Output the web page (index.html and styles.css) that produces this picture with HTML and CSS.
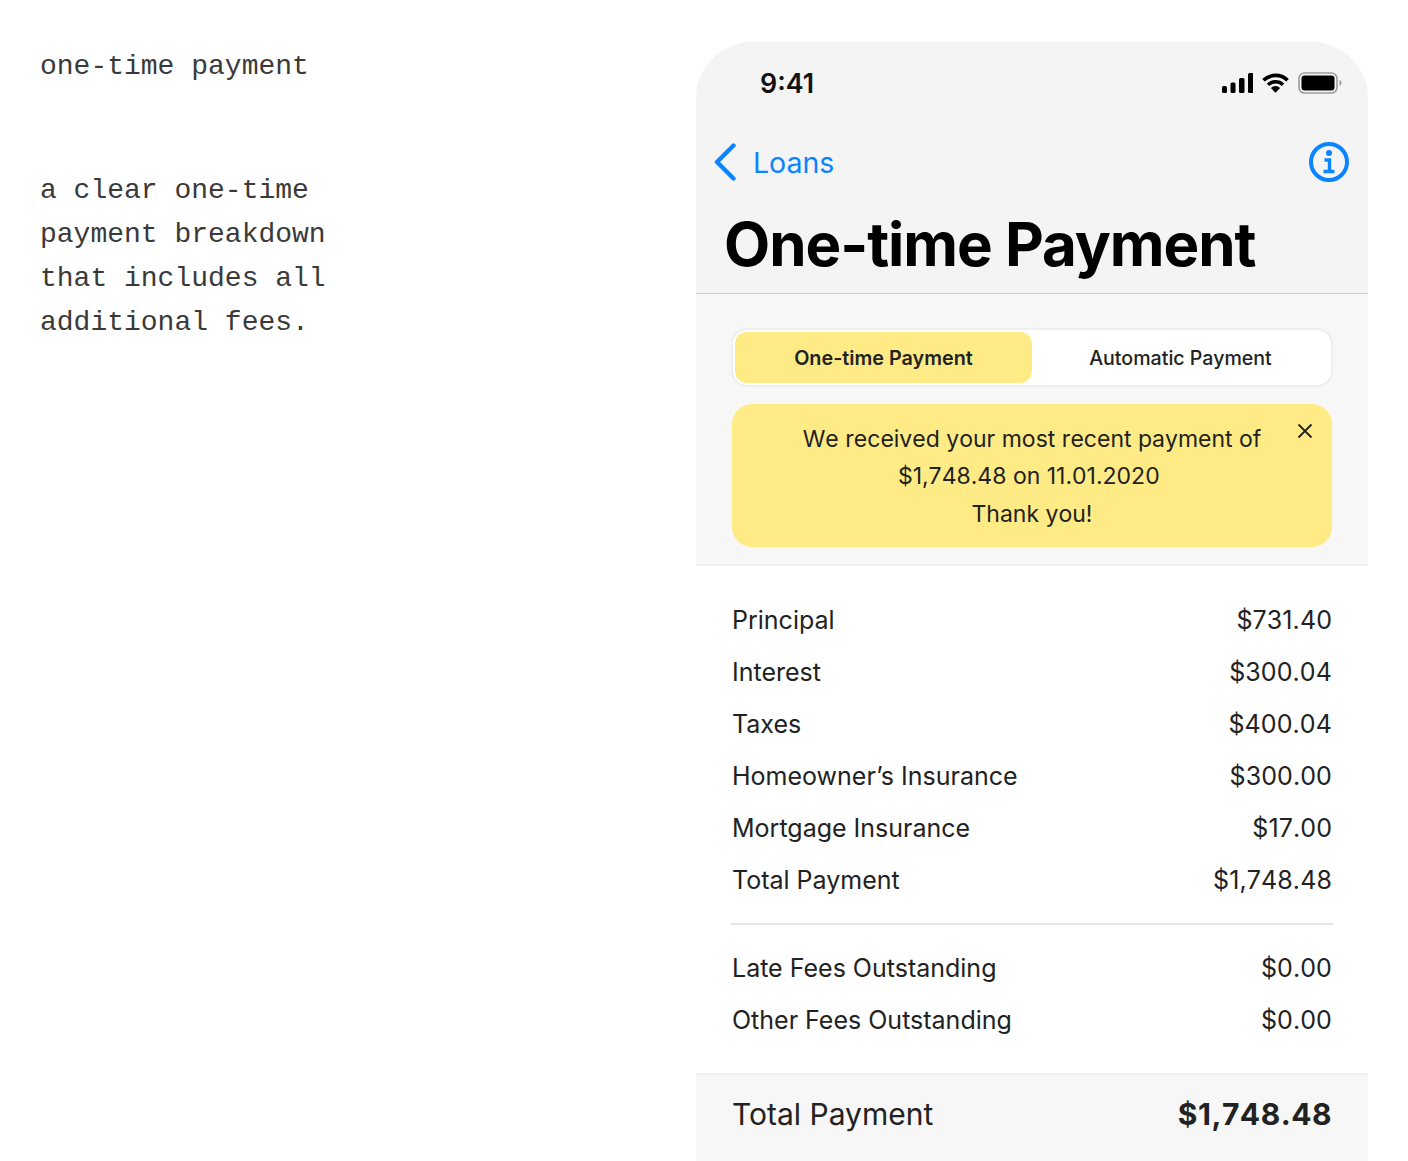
FILE: index.html
```html
<!DOCTYPE html>
<html lang="en">
<head>
    <meta charset="UTF-8">
    <title>One-time Payment</title>
    <link rel="stylesheet" href="styles.css">
</head>
<body>
    <div class="page">
        <div class="notes">
            <h2>one-time payment</h2>
            <p>a clear one-time<br>payment breakdown<br>that includes all<br>additional fees.</p>
        </div>

        <div class="phone">
            <div class="top">
                <div class="status">
                    <span class="clock">9:41</span>
                    <div class="status-icons">
                        <svg width="31" height="20" viewBox="0 0 31 20" fill="#000">
                            <rect x="0" y="13" width="5" height="7" rx="1.5"/>
                            <rect x="8.500" y="9.500" width="5" height="10.500" rx="1.5"/>
                            <rect x="17" y="5" width="5.500" height="15" rx="1.5"/>
                            <rect x="26" y="0" width="5.500" height="20" rx="1.5"/>
                        </svg>
                        <svg width="27" height="20" viewBox="0 0 28 20" fill="none" stroke="#000" stroke-width="3.800">
                            <path d="M1.500 7.200a18 18 0 0 1 25 0"/>
                            <path d="M6.200 11.800a11.400 11.400 0 0 1 15.600 0"/>
                            <path d="M14 20l-4.800-4.900a6.700 6.700 0 0 1 9.600 0z" fill="#000" stroke="none"/>
                        </svg>
                        <svg width="44" height="22" viewBox="0 0 44 22">
                            <rect x="1" y="1" width="38" height="20" rx="5.5" fill="none" stroke="#9b9b9b" stroke-width="1.6"/>
                            <rect x="3.500" y="3.500" width="33" height="15" rx="3" fill="#000"/>
                            <path d="M41.500 8v6c1.200-.4 2-1.600 2-3s-.8-2.600-2-3z" fill="#9b9b9b"/>
                        </svg>
                    </div>
                </div>
                <div class="nav">
                    <a class="back">
                        <svg width="22" height="38" viewBox="0 0 22 38" fill="none" stroke="#0a84ff" stroke-width="4.400" stroke-linecap="round" stroke-linejoin="round">
                            <path d="M19.500 2.500L3 19l16.500 16.500"/>
                        </svg>
                        <span>Loans</span>
                    </a>
                    <svg class="info" width="40" height="40" viewBox="0 0 40 40" fill="none" stroke="#0a84ff">
                        <circle cx="20" cy="20" r="18" stroke-width="4"/>
                        <circle cx="20" cy="11" r="3" fill="#0a84ff" stroke="none"/>
                        <path d="M15.500 18h5v12M14.500 29.500h11" stroke-width="3.400"/>
                    </svg>
                </div>
                <h1>One-time Payment</h1>
            </div>

            <div class="panel">
                <div class="tabs">
                    <div class="tab active">One-time Payment</div>
                    <div class="tab">Automatic Payment</div>
                </div>
                <div class="banner">
                    <p>We received your most recent payment of<br>$1,748.48 on 11.01.2020&nbsp;<br>Thank you!</p>
                    <svg class="close" width="16" height="16" viewBox="0 0 16 16" stroke="#222" stroke-width="1.800">
                        <path d="M1.500 1.500l13 13M14.500 1.500l-13 13"/>
                    </svg>
                </div>
            </div>

            <div class="rows">
                <div class="row"><span>Principal</span><span class="amount">$731.40</span></div>
                <div class="row"><span>Interest</span><span class="amount">$300.04</span></div>
                <div class="row"><span>Taxes</span><span class="amount">$400.04</span></div>
                <div class="row"><span>Homeowner’s Insurance</span><span class="amount">$300.00</span></div>
                <div class="row"><span>Mortgage Insurance</span><span class="amount">$17.00</span></div>
                <div class="row"><span>Total Payment</span><span class="amount">$1,748.48</span></div>
                <hr>
                <div class="row"><span>Late Fees Outstanding</span><span class="amount">$0.00</span></div>
                <div class="row"><span>Other Fees Outstanding</span><span class="amount">$0.00</span></div>
            </div>

            <div class="total">
                <span>Total Payment</span>
                <strong>$1,748.48</strong>
            </div>
        </div>
    </div>
</body>
</html>
```

FILE: styles.css
```css
* {
    margin: 0;
    padding: 0;
    box-sizing: border-box;
}

body {
    background: #fff;
    font-family: 'Inter', sans-serif;
    color: #222;
}

.page {
    display: flex;
    justify-content: space-between;
    height: 1161px;
    overflow: hidden;
    padding: 42px 40px 0 40px;
}

.notes {
    margin-top: 3px;
    font-family: 'Liberation Mono', monospace;
    font-size: 28px;
    line-height: 44px;
    color: #3a3a3a;
}

.notes h2 {
    font-size: inherit;
    font-weight: normal;
    margin-bottom: 80px;
}

.phone {
    width: 672px;
    display: flex;
    flex-direction: column;
}

.top {
    height: 252px;
    background: #f4f4f4;
    border-radius: 56px 56px 0 0;
    border-bottom: 1px solid #ccc;
}

.status {
    display: flex;
    justify-content: space-between;
    align-items: center;
    height: 34px;
    margin-top: 24px;
    padding: 0 26px 0 64px;
}

.clock {
    font-size: 26.800px;
    font-weight: 600;
    color: #111;
}

.status-icons {
    display: flex;
    align-items: center;
    gap: 9px;
}

.nav {
    display: flex;
    justify-content: space-between;
    align-items: center;
    height: 40px;
    margin-top: 42px;
    padding: 0 19px 0 18px;
}

.back {
    display: flex;
    align-items: center;
    gap: 17px;
    color: #0a84ff;
    font-size: 28.500px;
}

h1 {
    font-size: 60px;
    font-weight: 700;
    line-height: 72px;
    color: #000;
    margin-top: 26px;
    padding-left: 28px;
    letter-spacing: -1.050px;
}

.panel {
    background: #f7f7f7;
    height: 272px;
    padding: 34px 36px 0 36px;
    border-bottom: 2px solid #f0f0f0;
}

.tabs {
    display: flex;
    height: 59px;
    margin: 0 -1px;
    padding: 2px;
    background: #fff;
    border: 2px solid #eee;
    border-radius: 16px;
}

.tab {
    flex: 1;
    display: flex;
    align-items: center;
    justify-content: center;
    padding-top: 1px;
    font-size: 19.600px;
    font-weight: 500;
    color: #222;
}

.tab.active {
    flex: none;
    width: 297px;
    background: #ffeb85;
    border-radius: 12px;
    font-size: 19.800px;
    font-weight: 600;
}

.banner {
    position: relative;
    height: 143px;
    margin-top: 17px;
    padding-top: 17px;
    background: #ffeb85;
    border-radius: 20px;
    text-align: center;
    font-size: 23px;
    line-height: 37.500px;
    font-kerning: none;
}

.close {
    position: absolute;
    top: 19px;
    right: 19px;
}

.rows {
    padding: 28px 36px 0 36px;
    height: 508px;
}

.row {
    display: flex;
    justify-content: space-between;
    align-items: center;
    height: 52px;
    font-size: 25px;
}

.amount {
    font-kerning: none;
    letter-spacing: 0.100px;
}

.rows hr {
    border: none;
    border-top: 2px solid #e8e8e8;
    margin: 17px -1px;
}

.total {
    display: flex;
    justify-content: space-between;
    align-items: center;
    height: 88px;
    padding: 0 36px 8px 36px;
    background: #f7f7f7;
    border-top: 2px solid #f0f0f0;
    font-size: 30px;
}

.total strong {
    font-weight: 700;
    font-kerning: none;
    letter-spacing: 0.500px;
}
```
